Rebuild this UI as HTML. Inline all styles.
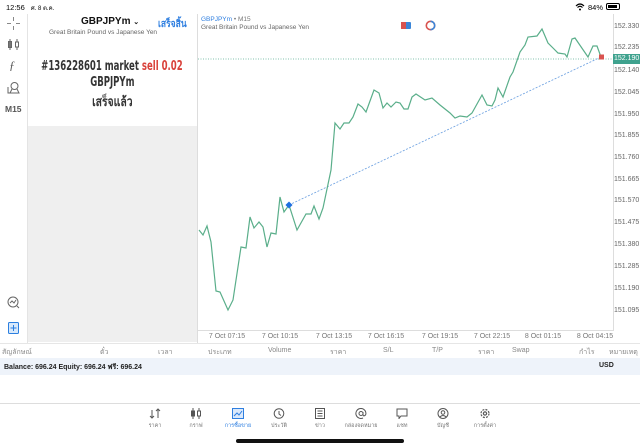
<!DOCTYPE html>
<html><head><meta charset="utf-8"><style>
*{margin:0;padding:0;box-sizing:border-box}
body{width:640px;height:447px;overflow:hidden;background:#fff;font-family:"Liberation Sans","Noto Sans CJK SC",sans-serif;position:relative;color:#222}
.a{position:absolute;white-space:nowrap}
.pl{position:absolute;left:614px;font-size:7px;color:#666}
.tl{position:absolute;top:333px;font-size:7px;color:#777;transform:translateX(-50%)}
.th{position:absolute;top:347px;font-size:7px;color:#888}
.nv{position:absolute;top:408px;width:40px;margin-left:-20px;text-align:center;color:#555}
.nv div{font-size:5.5px;margin-top:3px;color:#777}
.nv svg{display:block;margin:0 auto}
.ot{position:absolute;left:-88px;width:400px;text-align:center;font-size:13px;font-weight:bold;color:#333;font-family:'DejaVu Sans Condensed','Liberation Sans','Noto Sans CJK SC',sans-serif;white-space:nowrap}
.ot span.s{display:inline-block;transform:scaleX(0.73)}
</style></head><body>
<div class="a" style="left:6px;top:3px;font-size:7.5px;color:#000">12:56 <span style="font-size:6px;margin-left:4px">ศ. 8 ต.ค.</span></div>
<div class="a" style="left:588px;top:3px;font-size:7.5px;color:#000">84%</div>
<svg class="a" style="left:575px;top:3px" width="10" height="8"><path d="M1 3 Q5 -1 9 3 M2.5 4.5 Q5 2 7.5 4.5" stroke="#000" stroke-width="1.2" fill="none"/><circle cx="5" cy="6.5" r="1" fill="#000"/></svg>
<div class="a" style="left:606px;top:3px;width:14px;height:7px;border:1px solid #000;border-radius:2px;padding:1px"><div style="width:9px;height:3px;background:#000"></div></div>
<div class="a" style="left:27px;top:14px;width:1px;height:330px;background:#e4e4e4"></div>
<svg class="a" style="left:7px;top:17px" width="13" height="13" stroke="#888" stroke-width="1"><path d="M6.5 0v4M6.5 9v4M0 6.5h4M9 6.5h4"/></svg>
<svg class="a" style="left:7px;top:38px" width="13" height="13" stroke="#666" stroke-width="1" fill="#777"><path d="M3 1v11M10 1v11"/><rect x="1.5" y="3.5" width="3" height="6"/><rect x="8.5" y="4" width="3" height="5" fill="#fff"/></svg>
<div class="a" style="left:9px;top:58px;font-size:12px;font-style:italic;color:#555;font-family:'Liberation Serif',serif">ƒ</div>
<svg class="a" style="left:7px;top:81px" width="13" height="13" stroke="#666" fill="none"><circle cx="7.5" cy="5" r="3.5"/><path d="M5 8l-2 4h9l-2-4M1 6v6h3"/></svg>
<div class="a" style="left:5px;top:104px;font-size:8.5px;font-weight:bold;color:#555">M15</div>
<svg class="a" style="left:7px;top:296px" width="13" height="13" stroke="#666" fill="none"><circle cx="6" cy="6" r="5"/><path d="M3 7l2-2 2 2 2-3M10 10l2 2"/></svg>
<svg class="a" style="left:8px;top:322px" width="11" height="12"><rect x="0.5" y="0.5" width="10" height="11" rx="1" fill="#d8e9fb" stroke="#2c7fe0"/><path d="M5.5 3v6M2.5 6h6" stroke="#2c7fe0"/></svg>
<div class="a" style="left:28px;top:126px;width:169px;height:216px;background:#efefef"></div>
<div class="a" style="left:81px;top:16px;font-size:10px;font-weight:bold;color:#111">GBPJPYm <span style="font-size:7px">⌄</span></div>
<div class="a" style="left:158px;top:17px;font-size:10px;font-weight:bold;color:#2f7fe0;transform:scaleX(0.85);transform-origin:left">เสร็จสิ้น</div>
<div class="a" style="left:49px;top:29px;font-size:6.5px;color:#666">Great Britain Pound vs Japanese Yen</div>
<div class="ot" style="top:59px"><span class="s">#136228601 market <span style="color:#d9413a">sell 0.02</span></span></div>
<div class="ot" style="top:75px"><span class="s">GBPJPYm</span></div>
<div class="ot" style="top:91px"><span class="s" style="transform:scaleX(0.8)">เสร็จแล้ว</span></div>
<div class="a" style="left:197px;top:14px;width:1px;height:330px;background:#ddd"></div>
<div class="a" style="left:613px;top:14px;width:1px;height:316px;background:#ddd"></div>
<div class="a" style="left:198px;top:330px;width:416px;height:1px;background:#ddd"></div>
<div class="a" style="left:201px;top:16px;font-size:6.5px;color:#2f7fe0">GBPJPYm <span style="color:#777">• M15</span></div>
<div class="a" style="left:201px;top:24px;font-size:6.5px;color:#666">Great Britain Pound vs Japanese Yen</div>
<div class="a" style="left:401px;top:22px;width:10px;height:7px;background:#3b86d8;border-radius:1px"><div style="width:5px;height:7px;background:#d9534f"></div></div>
<svg class="a" style="left:425px;top:20px" width="11" height="11"><circle cx="5.5" cy="5.5" r="4.2" fill="none" stroke="#d9534f" stroke-width="1.6"/><path d="M5.5 1.3a4.2 4.2 0 0 1 0 8.4" fill="none" stroke="#3b86d8" stroke-width="1.6"/></svg>
<svg class="a" style="left:0;top:0" width="640" height="340">
<line x1="198" y1="59" x2="613" y2="59" stroke="#5aae94" stroke-width="0.8" stroke-dasharray="1,1.5"/>
<line x1="289" y1="205" x2="601" y2="57" stroke="#6a9fe0" stroke-width="0.8" stroke-dasharray="2,1.5"/>
<polyline fill="none" stroke="#5aae8a" stroke-width="1.2" points="199,230 203,235 207,226 211,242 216,291 220,292 228,310 233,300 241,247 246,248 250,217 254,228 259,222 263,227 267,247 271,233 276,234 280,197 284,212 289,205 297,230 306,214 311,214 314,206 319,219 323,208 331,170 335,123 340,129 344,123 349,123 353,117 358,104 362,107 366,112 374,90 379,93 383,108 387,103 391,107 396,102 400,103 404,109 408,109 412,97 416,94 425,100 432,98 440,105 450,113 455,118 460,116 467,117 472,113 482,95 487,105 492,106 495,100 498,88 503,97 510,77 513,72 520,52 525,45 528,37 537,36 542,29 548,43 553,48 558,53 565,54 567,57 572,39 575,38 588,57 593,46 597,46 601,57"/>
<rect x="286.5" y="202.5" width="5" height="5" fill="#1f6fe0" transform="rotate(45 289 205)"/>
<rect x="599" y="54.5" width="5" height="5" fill="#d9534f"/>
</svg>
<div class="pl" style="top:23px">152.330</div>
<div class="pl" style="top:44px">152.235</div>
<div class="a" style="left:613px;top:54px;width:27px;height:10px;background:#3fa28e;color:#fff;font-size:7px;padding-left:1px;line-height:10px">152.190</div>
<div class="pl" style="top:67px">152.140</div>
<div class="pl" style="top:89px">152.045</div>
<div class="pl" style="top:111px">151.950</div>
<div class="pl" style="top:132px">151.855</div>
<div class="pl" style="top:154px">151.760</div>
<div class="pl" style="top:176px">151.665</div>
<div class="pl" style="top:197px">151.570</div>
<div class="pl" style="top:219px">151.475</div>
<div class="pl" style="top:241px">151.380</div>
<div class="pl" style="top:263px">151.285</div>
<div class="pl" style="top:285px">151.190</div>
<div class="pl" style="top:307px">151.095</div>
<div class="tl" style="left:227px">7 Oct 07:15</div>
<div class="tl" style="left:280px">7 Oct 10:15</div>
<div class="tl" style="left:334px">7 Oct 13:15</div>
<div class="tl" style="left:386px">7 Oct 16:15</div>
<div class="tl" style="left:440px">7 Oct 19:15</div>
<div class="tl" style="left:492px">7 Oct 22:15</div>
<div class="tl" style="left:543px">8 Oct 01:15</div>
<div class="tl" style="left:595px">8 Oct 04:15</div>
<div class="a" style="left:0;top:343px;width:640px;height:1px;background:#e6e6e6"></div>
<div class="th" style="left:2px">สัญลักษณ์</div>
<div class="th" style="left:100px">ตั๋ว</div>
<div class="th" style="left:158px">เวลา</div>
<div class="th" style="left:208px">ประเภท</div>
<div class="th" style="left:268px">Volume</div>
<div class="th" style="left:330px">ราคา</div>
<div class="th" style="left:383px">S/L</div>
<div class="th" style="left:432px">T/P</div>
<div class="th" style="left:478px">ราคา</div>
<div class="th" style="left:512px">Swap</div>
<div class="th" style="left:579px">กำไร</div>
<div class="th" style="left:609px">หมายเหตุ</div>
<div class="a" style="left:0;top:358px;width:640px;height:17px;background:#eef3fa"></div>
<div class="a" style="left:4px;top:362px;font-size:7px;font-weight:bold;color:#222">Balance: 696.24 Equity: 696.24 ฟรี: 696.24</div>
<div class="a" style="left:599px;top:362px;font-size:7px;font-weight:bold;color:#222">USD</div>
<div class="a" style="left:0;top:403px;width:640px;height:1px;background:#ddd"></div>
<div class="nv" style="left:155px"><svg width="12" height="11" stroke="#555" fill="none"><path d="M3 2v8M1 8l2 2 2-2M9 10V1M7 3l2-2 2 2"/></svg><div>ราคา</div></div>
<div class="nv" style="left:196px"><svg width="12" height="11" stroke="#555" fill="#555"><path d="M3 0v11M9 0v11"/><rect x="1.5" y="3" width="3" height="5"/><rect x="7.5" y="3" width="3" height="5" fill="#fff"/></svg><div>กราฟ</div></div>
<div class="nv" style="left:238px"><svg width="12" height="11"><rect x="0.5" y="0.5" width="11" height="10" fill="#dbe9fb" stroke="#2f7fe0"/><path d="M2 8l3-3 2 2 3-4" stroke="#2f7fe0" fill="none"/></svg><div style="color:#2f7fe0">การซื้อขาย</div></div>
<div class="nv" style="left:279px"><svg width="12" height="11" stroke="#555" fill="none"><circle cx="6" cy="5.5" r="4.8"/><path d="M6 3v3l2 1.5"/></svg><div>ประวัติ</div></div>
<div class="nv" style="left:320px"><svg width="12" height="11" stroke="#555" fill="none"><rect x="1.5" y="0.5" width="9" height="10"/><path d="M3.5 3h5M3.5 5.5h5M3.5 8h5"/></svg><div>ข่าว</div></div>
<div class="nv" style="left:361px"><svg width="12" height="11" stroke="#555" fill="none"><circle cx="6" cy="5.5" r="2"/><path d="M8 4v2.5q0 2 2 1 1.3-1 .8-3A5 5 0 1 0 8 10"/></svg><div>กล่องจดหมาย</div></div>
<div class="nv" style="left:402px"><svg width="12" height="11" stroke="#555" fill="none"><path d="M1 1h10v7H5l-2 2.5V8H1z"/></svg><div>แชท</div></div>
<div class="nv" style="left:443px"><svg width="12" height="11" stroke="#555" fill="none"><circle cx="6" cy="5.5" r="5"/><circle cx="6" cy="4.5" r="1.8"/><path d="M2.8 9q3.2-3 6.4 0"/></svg><div>บัญชี</div></div>
<div class="nv" style="left:485px"><svg width="12" height="11" stroke="#555" fill="none" stroke-width="1.2"><circle cx="6" cy="5.5" r="4" stroke-dasharray="2,1.2"/><circle cx="6" cy="5.5" r="1.6"/></svg><div>การตั้งค่า</div></div>
<div class="a" style="left:236px;top:439px;width:168px;height:4px;border-radius:2px;background:#111"></div>
</body></html>
